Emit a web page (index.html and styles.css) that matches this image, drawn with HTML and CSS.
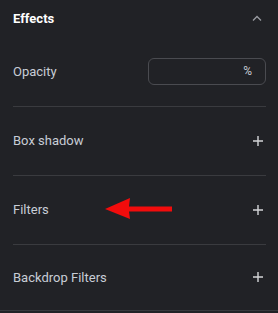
FILE: index.html
```html
<!DOCTYPE html>
<html>
<head>
<meta charset="utf-8">
<link rel="stylesheet" href="styles.css">
</head>
<body>
<div class="panel">
  <div class="header">
    <span class="title">Effects</span>
    <svg class="chev" width="10" height="6" viewBox="0 0 10 6"><path d="M1 5.5 L5 1.5 L9 5.5" fill="none" stroke="#9a9ca2" stroke-width="1.3"/></svg>
  </div>
  <div class="row opacity">
    <span class="label">Opacity</span>
    <div class="input"><span class="unit">%</span></div>
  </div>
  <div class="divider"></div>
  <div class="row">
    <span class="label lifted">Box shadow</span>
    <svg class="plus" width="10" height="10" viewBox="0 0 10 10"><path d="M5 0V10M0 5H10" stroke="#d4d5d8" stroke-width="1.4"/></svg>
  </div>
  <div class="divider"></div>
  <div class="row">
    <span class="label lifted">Filters</span>
    <svg class="plus" width="10" height="10" viewBox="0 0 10 10"><path d="M5 0V10M0 5H10" stroke="#d4d5d8" stroke-width="1.4"/></svg>
  </div>
  <div class="divider"></div>
  <div class="row last">
    <span class="label">Backdrop Filters</span>
    <svg class="plus" width="10" height="10" viewBox="0 0 10 10"><path d="M5 0V10M0 5H10" stroke="#d4d5d8" stroke-width="1.4"/></svg>
  </div>
  <svg class="arrow" width="70" height="22" viewBox="0 0 70 22"><path d="M0 11 L25 0 L24 8.5 L67 8.5 L67 13.5 L24 13.5 L25 21 Z" fill="#f20c0c"/></svg>
</div>
</body>
</html>
```
FILE: styles.css
```css
html, body {
  margin: 0;
  padding: 0;
  background: #212226;
}
.panel {
  position: relative;
  width: 278px;
  height: 310px;
  border-bottom: 1px solid #38393d;
  font-family: Roboto, "Liberation Sans", sans-serif;
  display: flex;
  flex-direction: column;
}
.header {
  height: 36px;
  padding: 0 16px 0 13px;
  display: flex;
  align-items: center;
  justify-content: space-between;
}
.title {
  color: #ffffff;
  font-weight: 700;
  font-size: 13px;
}
.row {
  height: 68px;
  padding: 0 15px 0 13px;
  display: flex;
  align-items: center;
  justify-content: space-between;
}
.row.opacity {
  height: 70px;
  padding-right: 12px;
}
.row.last {
  height: 64px;
}
.label {
  color: #c8cdd6;
  font-size: 13px;
}
.label.lifted {
  padding-bottom: 2px;
}
.divider {
  height: 1px;
  margin: 0 12px 0 13px;
  background: #3a3b3f;
}
.input {
  height: 25px;
  border: 1px solid #4a4b50;
  border-radius: 6px;
  display: flex;
  align-items: center;
  justify-content: flex-end;
  padding-right: 13px;
  box-sizing: content-box;
  width: 103px;
}
.unit {
  color: #c5cad3;
  font-size: 12px;
}
.arrow {
  position: absolute;
  left: 105px;
  top: 198px;
}
```
